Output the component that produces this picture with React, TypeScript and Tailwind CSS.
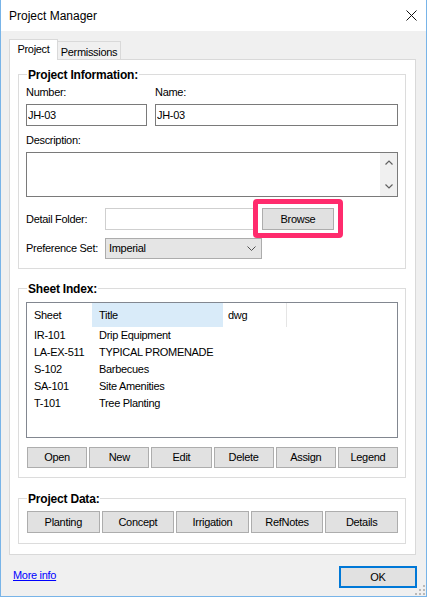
import React from "react";

const btn =
  "flex-1 min-w-0 h-full bg-[#e1e1e1] border border-[#adadad] flex items-center justify-center text-[11px] text-black";

function GroupBox({
  title,
  className,
  children,
}: {
  title: string;
  className: string;
  children: React.ReactNode;
}) {
  return (
    <div className={`relative w-[388px] border border-[#dcdcdc] px-[7px] ${className}`}>
      <span className="absolute left-[8px] -top-[8px] bg-white px-px text-[12px] leading-[16px] font-bold tracking-[-0.2px] text-black">
        {title}
      </span>
      {children}
    </div>
  );
}

function TextBox({ value, className }: { value?: string; className: string }) {
  return (
    <input
      readOnly
      value={value ?? ""}
      className={`h-[22px] bg-white px-[1px] text-[11px] text-black outline-none ${className}`}
    />
  );
}

const sheets = [
  { sheet: "IR-101", title: "Drip Equipment" },
  { sheet: "LA-EX-511", title: "TYPICAL PROMENADE" },
  { sheet: "S-102", title: "Barbecues" },
  { sheet: "SA-101", title: "Site Amenities" },
  { sheet: "T-101", title: "Tree Planting" },
];

export default function App() {
  return (
    <div className="relative w-[427px] h-[597px] flex flex-col bg-[#f0f0f0] border-x border-b border-[#78b4e8] font-['Liberation_Sans',Arial,sans-serif] text-[11px] tracking-[-0.3px] text-black">
      {/* Title bar */}
      <div className="h-[31px] bg-white flex items-center justify-between pl-[8px] pr-[9px]">
        <span className="text-[12px] leading-[16px] tracking-normal">Project Manager</span>
        <svg width="11" height="11" viewBox="0 0 11 11" className="mt-[-1px]">
          <path d="M0.5 0.5L10.5 10.5M10.5 0.5L0.5 10.5" stroke="#111" strokeWidth="1" />
        </svg>
      </div>

      {/* Tabs */}
      <div className="ml-[8px] mt-[8px] h-[20px] flex items-end">
        <div className="relative z-10 h-[21px] w-[49px] -mb-px bg-white border-t border-x border-[#d9d9d9] flex justify-center pt-[3px] leading-[13px]">
          Project
        </div>
        <div className="h-[18px] w-[64px] -ml-px border-t border-x border-[#d9d9d9] flex justify-center pt-[4px] leading-[13px]">
          Permissions
        </div>
      </div>

      {/* Tab panel */}
      <div className="ml-[8px] w-[407px] h-[496px] bg-white border border-[#d9d9d9] pl-[8px] pt-[14px]">
        <GroupBox title="Project Information:" className="h-[195px]">
          <div className="mt-[11px] flex gap-[8px]">
            <div className="w-[121px] flex flex-col">
              <div className="leading-[13px]">Number:</div>
              <TextBox value="JH-03" className="mt-[5px] w-full border border-[#7a7a7a]" />
            </div>
            <div className="flex-1 flex flex-col">
              <div className="leading-[13px]">Name:</div>
              <TextBox value="JH-03" className="mt-[5px] w-full border border-[#7a7a7a]" />
            </div>
          </div>
          <div className="mt-[8px] leading-[13px]">Description:</div>
          <div className="mt-[5px] h-[45px] border border-[#7a7a7a] bg-white flex justify-end">
            <div className="w-[17px] h-full bg-[#f0f0f0] flex flex-col items-center justify-between py-[7px]">
              <svg width="8" height="5" viewBox="0 0 8 5">
                <path d="M0.5 4.5L4 1L7.5 4.5" fill="none" stroke="#606060" strokeWidth="1.2" />
              </svg>
              <svg width="8" height="5" viewBox="0 0 8 5">
                <path d="M0.5 0.5L4 4L7.5 0.5" fill="none" stroke="#606060" strokeWidth="1.2" />
              </svg>
            </div>
          </div>
          <div className="mt-[11px] h-[22px] flex items-center">
            <span className="w-[79px]">Detail Folder:</span>
            <TextBox className="w-[151px] border border-[#cfcfcf]" />
            <div className="relative ml-[6px] w-[72px] h-[22px]">
              <div className={btn}>Browse</div>
              <span className="absolute -left-[9px] -right-[9px] -top-[9px] -bottom-[8px] border-[5px] border-[#ff2b6d] rounded-[4px]" />
            </div>
          </div>
          <div className="mt-[8px] h-[21px] flex items-center">
            <span className="w-[79px]">Preference Set:</span>
            <div className="w-[157px] h-full bg-[#e5e5e5] border border-[#acacac] flex items-center justify-between pl-[3px] pr-[5px]">
              <span>Imperial</span>
              <svg width="9" height="5" viewBox="0 0 9 5">
                <path d="M0.5 0.5L4.5 4.5L8.5 0.5" fill="none" stroke="#505050" strokeWidth="1" />
              </svg>
            </div>
          </div>
        </GroupBox>

        <GroupBox title="Sheet Index:" className="mt-[19px] h-[190px]">
          <div className="mt-[13px] h-[136px] border border-[#828790] bg-white">
            <div className="h-[24px] flex items-center">
              <div className="w-[65px] h-full flex items-center pl-[7px]">Sheet</div>
              <div className="w-[131px] h-full flex items-center pl-[7px] bg-[#d9ebf9]">Title</div>
              <div className="w-[63px] h-full flex items-center pl-[5px]">dwg</div>
              <div className="w-px h-full bg-[#e5e5e5]" />
            </div>
            {sheets.map((s) => (
              <div key={s.sheet} className="h-[17px] flex items-center leading-[17px]">
                <div className="w-[65px] pl-[7px]">{s.sheet}</div>
                <div className="pl-[7px]">{s.title}</div>
              </div>
            ))}
          </div>
          <div className="mt-[9px] ml-px w-[371px] h-[21px] flex gap-[2px]">
            {["Open", "New", "Edit", "Delete", "Assign", "Legend"].map((b) => (
              <div key={b} className={btn}>
                {b}
              </div>
            ))}
          </div>
        </GroupBox>

        <GroupBox title="Project Data:" className="mt-[20px] h-[46px]">
          <div className="mt-[12px] ml-px w-[371px] h-[22px] flex gap-[2px]">
            {["Planting", "Concept", "Irrigation", "RefNotes", "Details"].map((b) => (
              <div key={b} className={btn}>
                {b}
              </div>
            ))}
          </div>
        </GroupBox>
      </div>

      {/* Footer */}
      <div className="mt-[11px] pl-[12px] pr-[9px] flex items-center justify-between">
        <span className="mb-[3px] text-[#0000ff] underline leading-[13px]">More info</span>
        <div className="w-[78px] h-[22px] bg-[#e1e1e1] border-2 border-[#0078d7] flex items-center justify-center">
          OK
        </div>
      </div>

      <svg width="12" height="12" viewBox="0 0 12 12" className="absolute right-0 bottom-0">
        <g fill="#b9b9b9">
          <rect x="9" y="1" width="2" height="2" />
          <rect x="5" y="5" width="2" height="2" />
          <rect x="9" y="5" width="2" height="2" />
          <rect x="1" y="9" width="2" height="2" />
          <rect x="5" y="9" width="2" height="2" />
          <rect x="9" y="9" width="2" height="2" />
        </g>
      </svg>
    </div>
  );
}
